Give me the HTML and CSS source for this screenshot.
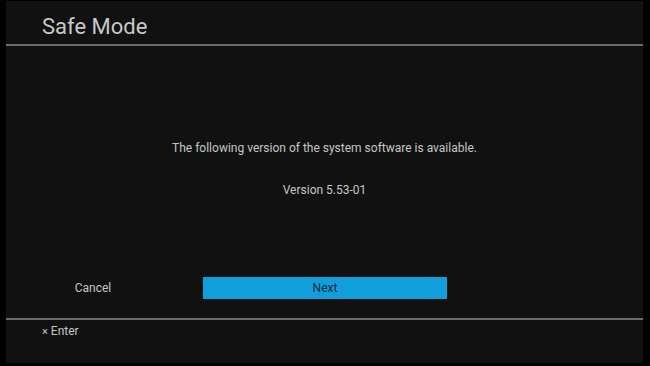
FILE: index.html
```html
<!DOCTYPE html>
<html lang="en">
<head>
  <meta charset="UTF-8">
  <meta name="viewport" content="width=device-width, initial-scale=1.0">
  <title>Safe Mode</title>
  <link rel="stylesheet" href="styles.css">
</head>
<body>

<div class="screen">
  <div class="header">
    <h1>Safe Mode</h1>
  </div>

  <div class="main">
    <p class="message">The following version of the system software is available.</p>
    <p class="version">Version 5.53-01</p>

    <div class="buttons">
      <div class="btn cancel">Cancel</div>
      <div class="btn next">Next</div>
    </div>
  </div>

  <div class="footer">
    <span class="cross">&times;</span> Enter
  </div>
</div>

</body>
</html>
```

FILE: styles.css
```css
html, body {
  margin: 0;
  padding: 0;
  background-color: #000;
  height: 100%;
}

body {
  font-family: Roboto, "Liberation Sans", sans-serif;
  color: #c6c6c6;
}

.screen {
  display: flex;
  flex-direction: column;
  width: 637px;
  height: 362px;
  margin: 1px 0 0 6px;
  background-color: #111;
}

.header {
  display: flex;
  align-items: flex-end;
  height: 45px;
  padding-left: 36px;
  border-bottom: 2px solid #6c6c6c;
  box-sizing: border-box;
}

.header h1 {
  margin: 0 0 4px 0;
  font-size: 22px;
  font-weight: normal;
  line-height: 26px;
  color: #c8c8c8;
}

.main {
  height: 272px;
  border-bottom: 2px solid #6c6c6c;
  text-align: center;
}

.message {
  margin: 94px 0 0 0;
  font-size: 12px;
  line-height: 16px;
}

.version {
  margin: 26px 0 0 0;
  font-size: 12px;
  line-height: 16px;
}

.buttons {
  display: flex;
  align-items: center;
  gap: 59px;
  margin-top: 79px;
  padding-left: 36px;
}

.btn {
  height: 22px;
  line-height: 22px;
  font-size: 12px;
}

.cancel {
  width: 102px;
}

.next {
  width: 244px;
  background-color: #109fdb;
  color: #13293a;
}

.footer {
  padding: 3px 0 0 36px;
  font-size: 12px;
  line-height: 16px;
}

.cross {
  font-size: 11px;
}
```
